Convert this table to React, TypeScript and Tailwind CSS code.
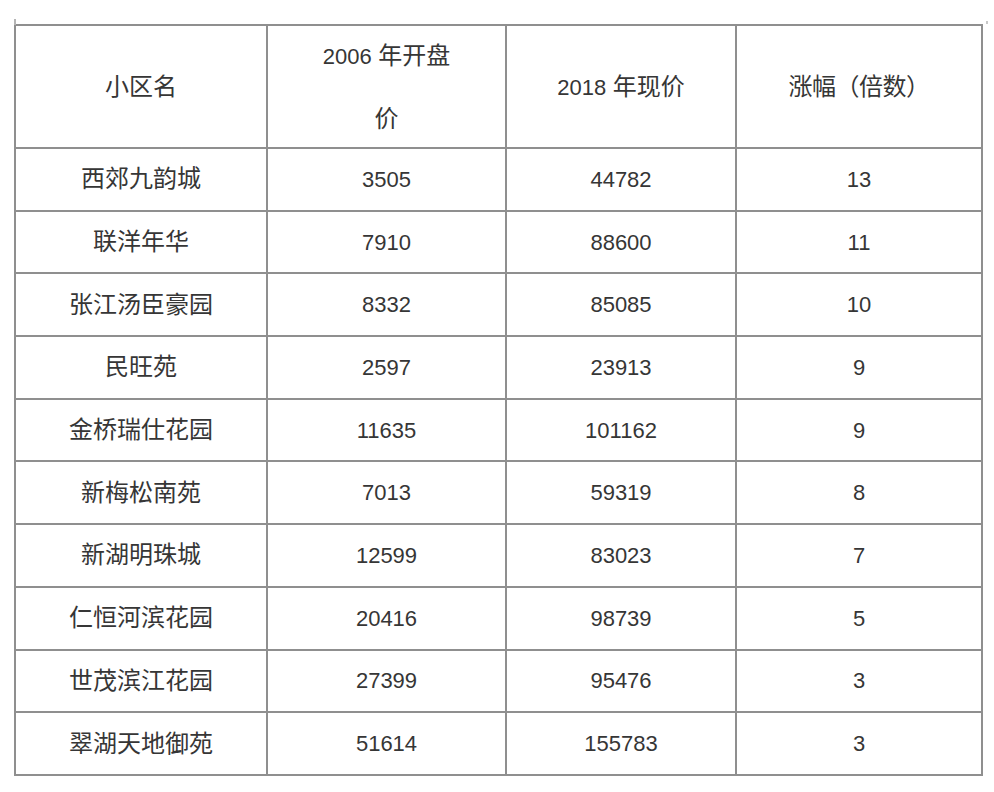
const rows = [
  ["西郊九韵城", "3505", "44782", "13"],
  ["联洋年华", "7910", "88600", "11"],
  ["张江汤臣豪园", "8332", "85085", "10"],
  ["民旺苑", "2597", "23913", "9"],
  ["金桥瑞仕花园", "11635", "101162", "9"],
  ["新梅松南苑", "7013", "59319", "8"],
  ["新湖明珠城", "12599", "83023", "7"],
  ["仁恒河滨花园", "20416", "98739", "5"],
  ["世茂滨江花园", "27399", "95476", "3"],
  ["翠湖天地御苑", "51614", "155783", "3"],
];

const widths = ["w-[252px]", "w-[239px]", "w-[230px]", "w-[246px]"];

export default function App() {
  return (
    <div
      className="w-[994px] h-[792px] bg-white pl-[14px] pt-[24px] text-[#363636]"
      style={{ fontFamily: '"Liberation Sans", "Noto Sans CJK SC", sans-serif' }}
    >
      <div className="relative flex flex-col w-[969px] border-t-2 border-l-2 border-[#8f8f8f]">
        {/* little scan ticks above the corners */}
        <div className="absolute left-[-2px] top-[-7px] w-[2px] h-[6px] bg-[#b5b5b5]" />
        <div className="absolute right-[-5px] top-[-5px] w-[2px] h-[3px] bg-[#c8c8c8]" />
        {/* header */}
        <div className="flex h-[123px]">
          <div className={`${widths[0]} flex items-center justify-center border-r-2 border-b-2 border-[#8f8f8f] text-[24px]`}>
            小区名
          </div>
          <div className={`${widths[1]} flex flex-col items-center justify-center border-r-2 border-b-2 border-[#8f8f8f] text-[24px] leading-[62px] pt-[2px]`}>
            <span>
              <span className="text-[22px]">2006</span> 年开盘
            </span>
            <span>价</span>
          </div>
          <div className={`${widths[2]} flex items-center justify-center border-r-2 border-b-2 border-[#8f8f8f] text-[24px]`}>
            <span>
              <span className="text-[22px]">2018</span> 年现价
            </span>
          </div>
          <div className={`${widths[3]} flex items-center justify-center border-r-2 border-b-2 border-[#8f8f8f] text-[24px] tracking-[-0.5px]`}>
            涨幅（倍数）
          </div>
        </div>
        {rows.map((r) => (
          <div key={r[0]} className="flex h-[62.7px]">
            {r.map((cell, i) => (
              <div
                key={i}
                className={`${widths[i]} flex items-center justify-center border-r-2 border-b-2 border-[#8f8f8f] ${
                  i === 0 ? "text-[24px]" : "text-[22px]"
                }`}
              >
                {cell}
              </div>
            ))}
          </div>
        ))}
      </div>
    </div>
  );
}
